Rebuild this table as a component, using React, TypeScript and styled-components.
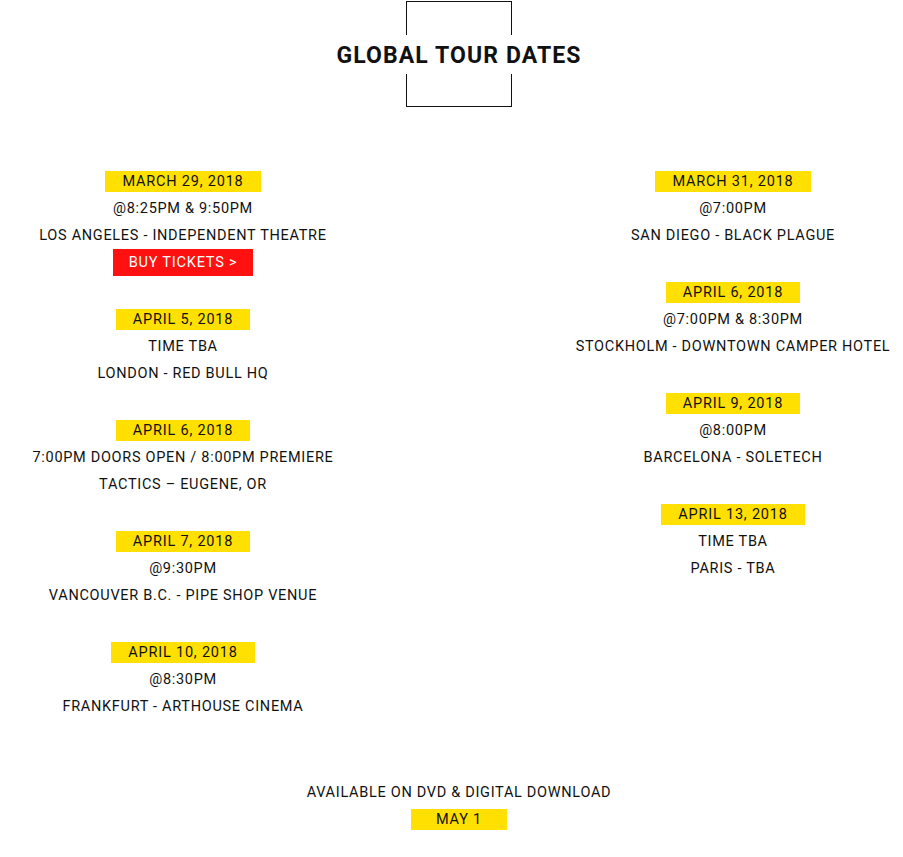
import React from "react";
import styled, { createGlobalStyle } from "styled-components";

const GlobalStyle = createGlobalStyle`
    body {
        margin: 0;
        background: #ffffff;
        font-family: "Roboto", "Liberation Sans", sans-serif;
        color: #111111;
    }
`;

const Page = styled.div`
    width: 903px;
    padding-left: 15px;
    box-sizing: border-box;
    text-transform: uppercase;
`;

const Header = styled.div`
    display: flex;
    justify-content: center;
    padding-top: 1px;
`;

const HeaderBox = styled.div`
    width: 104px;
    height: 104px;
    border: 1px solid #111111;
    display: flex;
    align-items: center;
    justify-content: center;
`;

const Title = styled.h1`
    margin: 0;
    padding: 3px 6px 0;
    background: #ffffff;
    white-space: nowrap;
    font-size: 23px;
    line-height: 36px;
    font-weight: 700;
    letter-spacing: 1.1px;
`;

const Columns = styled.div`
    display: flex;
    justify-content: space-between;
    margin-top: 61px;
`;

const Column = styled.div<{ $width: number }>`
    width: ${(p) => p.$width}px;
    display: flex;
    flex-direction: column;
    align-items: center;
`;

const Entry = styled.div`
    display: flex;
    flex-direction: column;
    align-items: center;
    margin-bottom: 30px;
`;

const Row = styled.div`
    height: 27px;
    display: flex;
    align-items: center;
    justify-content: center;
    font-size: 14.5px;
    letter-spacing: 0.7px;
    white-space: nowrap;
`;

const DateBadge = styled.span<{ $pad?: number }>`
    display: inline-block;
    background: #ffe000;
    padding: 0 ${(p) => p.$pad ?? 17}px;
    line-height: 21px;
    font-size: 14.5px;
    letter-spacing: 0.8px;
`;

const TicketButton = styled.a`
    display: inline-block;
    background: #ff1111;
    color: #ffffff;
    text-decoration: none;
    padding: 0 16px;
    line-height: 27px;
    font-size: 14.5px;
    letter-spacing: 0.8px;
`;

const Footer = styled.div`
    display: flex;
    flex-direction: column;
    align-items: center;
    margin-top: 29px;
`;

type Show = { date: string; time: string; place: string; tickets?: boolean };

const left: Show[] = [
    { date: "March 29, 2018", time: "@8:25PM & 9:50PM", place: "Los Angeles - Independent Theatre", tickets: true },
    { date: "April 5, 2018", time: "Time TBA", place: "London - Red Bull HQ" },
    { date: "April 6, 2018", time: "7:00PM Doors Open / 8:00PM Premiere", place: "Tactics – Eugene, OR" },
    { date: "April 7, 2018", time: "@9:30PM", place: "Vancouver B.C. - Pipe Shop Venue" },
    { date: "April 10, 2018", time: "@8:30PM", place: "Frankfurt - Arthouse Cinema" },
];

const right: Show[] = [
    { date: "March 31, 2018", time: "@7:00PM", place: "San Diego - Black Plague" },
    { date: "April 6, 2018", time: "@7:00PM & 8:30PM", place: "Stockholm - Downtown Camper Hotel" },
    { date: "April 9, 2018", time: "@8:00PM", place: "Barcelona - Soletech" },
    { date: "April 13, 2018", time: "Time TBA", place: "Paris - TBA" },
];

const ShowEntry = ({ show }: { show: Show }) => (
    <Entry>
        <Row>
            <DateBadge>{show.date}</DateBadge>
        </Row>
        <Row>{show.time}</Row>
        <Row>{show.place}</Row>
        {show.tickets && (
            <Row>
                <TicketButton href="#">Buy Tickets &gt;</TicketButton>
            </Row>
        )}
    </Entry>
);

export default function App() {
    return (
        <Page>
            <GlobalStyle />
            <Header>
                <HeaderBox>
                    <Title>Global Tour Dates</Title>
                </HeaderBox>
            </Header>
            <Columns>
                <Column $width={336}>
                    {left.map((s) => (
                        <ShowEntry key={s.date + s.place} show={s} />
                    ))}
                </Column>
                <Column $width={340}>
                    {right.map((s) => (
                        <ShowEntry key={s.date + s.place} show={s} />
                    ))}
                </Column>
            </Columns>
            <Footer>
                <Row>Available on DVD &amp; Digital Download</Row>
                <Row>
                    <DateBadge $pad={25}>May 1</DateBadge>
                </Row>
            </Footer>
        </Page>
    );
}
